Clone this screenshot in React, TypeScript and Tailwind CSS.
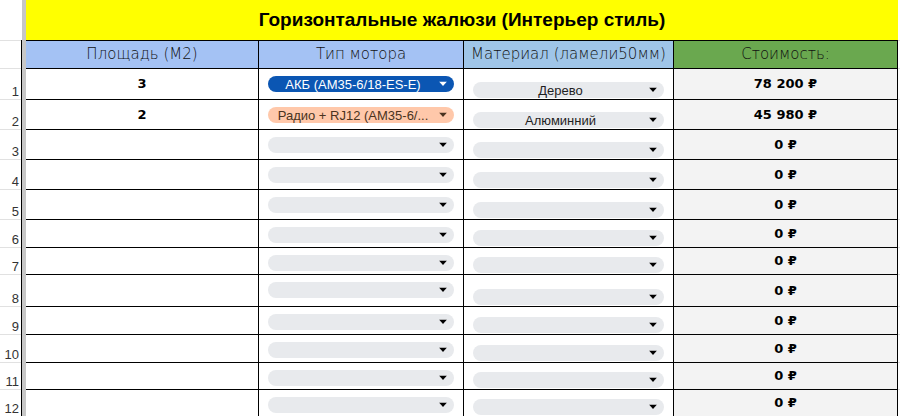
import React from 'react';

type Tone = 'blue' | 'peach' | 'empty';

type Row = {
  n: number;
  h: string;
  area?: string;
  motor?: string;
  tone: Tone;
  material?: string;
  price: string;
};

const ROWS: Row[] = [
  { n: 1, h: 'h-[31px]', area: '3', motor: 'АКБ (АМ35-6/18-ES-E)', tone: 'blue', material: 'Дерево', price: '78 200 ₽' },
  { n: 2, h: 'h-[30px]', area: '2', motor: 'Радио + RJ12 (АМ35-6/...', tone: 'peach', material: 'Алюминний', price: '45 980 ₽' },
  { n: 3, h: 'h-[30px]', tone: 'empty', price: '0 ₽' },
  { n: 4, h: 'h-[30px]', tone: 'empty', price: '0 ₽' },
  { n: 5, h: 'h-[30px]', tone: 'empty', price: '0 ₽' },
  { n: 6, h: 'h-[28px]', tone: 'empty', price: '0 ₽' },
  { n: 7, h: 'h-[27px]', tone: 'empty', price: '0 ₽' },
  { n: 8, h: 'h-[32px]', tone: 'empty', price: '0 ₽' },
  { n: 9, h: 'h-[28px]', tone: 'empty', price: '0 ₽' },
  { n: 10, h: 'h-[28px]', tone: 'empty', price: '0 ₽' },
  { n: 11, h: 'h-[27px]', tone: 'empty', price: '0 ₽' },
  { n: 12, h: 'h-[27px]', tone: 'empty', price: '0 ₽' },
];

const chipTone: Record<Tone, string> = {
  blue: 'bg-[#0b56b3] text-white',
  peach: 'bg-[#ffc8aa] text-[#4a3320]',
  empty: 'bg-[#e8eaed] text-[#1f1f1f]',
};

const arrowTone: Record<Tone, string> = {
  blue: 'fill-white',
  peach: 'fill-[#4a3320]',
  empty: 'fill-black',
};

const Caret = ({ tone }: { tone: Tone }) => (
  <svg width="8" height="5" viewBox="0 0 8 5" className={`absolute right-[7px] top-1/2 -translate-y-1/2 ${arrowTone[tone]}`}>
    <path d="M0 0h8L4 4.5z" />
  </svg>
);

const Chip = ({ label, tone }: { label?: string; tone: Tone }) => (
  <div className={`relative h-[16px] w-full rounded-full ${chipTone[tone]} pl-[8px] pr-[24px] flex items-center`}>
    <span className="block w-full whitespace-nowrap text-center text-[13px] leading-none font-['Liberation_Sans',Arial,sans-serif]">
      {label}
    </span>
    <Caret tone={tone} />
  </div>
);

const Gutter = ({ children }: { children?: React.ReactNode }) => (
  <>
    <div className="w-[21px] shrink-0 border-b border-[#e1e1e1] flex items-end justify-end pr-[2px] pb-[1px] text-[13px] leading-none text-[#333] font-['Liberation_Sans',Arial,sans-serif]">
      {children}
    </div>
    <div className="w-px shrink-0 bg-black" />
    <div className="w-[4px] shrink-0 bg-[#c7c7c7]" />
  </>
);

const headCell =
  "border-r border-b border-black flex items-center justify-center text-[15px] text-[#111] font-['DejaVu_Sans',sans-serif] font-extralight whitespace-nowrap overflow-hidden";

const valueText = "font-['DejaVu_Sans',sans-serif] font-bold text-[13px] text-black";

export default function App() {
  return (
    <div className="w-[900px] h-[416px] overflow-hidden bg-white select-none">
      {/* title */}
      <div className="flex h-[41px]">
        <div className="w-[21px] shrink-0 border-b border-[#e1e1e1]" />
        <div className="w-px shrink-0 border-b border-black" />
        <div className="w-[4px] shrink-0 bg-[#c7c7c7]" />
        <div className="w-[872px] shrink-0 bg-[#ffff00] border-b border-black flex items-center justify-center">
          <span className="text-[19px] font-bold text-black font-['Liberation_Sans',Arial,sans-serif]">
            Горизонтальные жалюзи (Интерьер стиль)
          </span>
        </div>
        <div className="flex-1 border-b border-[#e1e1e1]" />
      </div>

      {/* column headers */}
      <div className="flex h-[28px]">
        <Gutter />
        <div className={`w-[233px] bg-[#a4c2f4] ${headCell}`}>Площадь (М2)</div>
        <div className={`w-[205px] bg-[#a4c2f4] ${headCell}`}>Тип мотора</div>
        <div className={`w-[210px] bg-[#9fc5e8] ${headCell}`}>Материал (ламели50мм)</div>
        <div className={`w-[224px] bg-[#6aa84f] ${headCell}`}>Стоимость:</div>
        <div className="flex-1 border-b border-[#e1e1e1]" />
      </div>

      {ROWS.map((r) => (
        <div key={r.n} className={`flex ${r.h}`}>
          <Gutter>{r.n}</Gutter>
          <div className="w-[233px] shrink-0 border-r border-b border-black flex items-center justify-center">
            <span className={valueText}>{r.area}</span>
          </div>
          <div className="w-[205px] shrink-0 border-r border-b border-black px-[9px] pt-[7px]">
            <Chip label={r.motor} tone={r.tone} />
          </div>
          <div className="w-[210px] shrink-0 border-r border-b border-black px-[9px] pb-px flex items-end">
            <Chip label={r.material} tone="empty" />
          </div>
          <div className="w-[224px] shrink-0 bg-[#f3f3f3] border-r border-b border-black flex items-center justify-center">
            <span className={valueText}>{r.price}</span>
          </div>
          <div className="flex-1 border-b border-[#e1e1e1]" />
        </div>
      ))}
    </div>
  );
}
